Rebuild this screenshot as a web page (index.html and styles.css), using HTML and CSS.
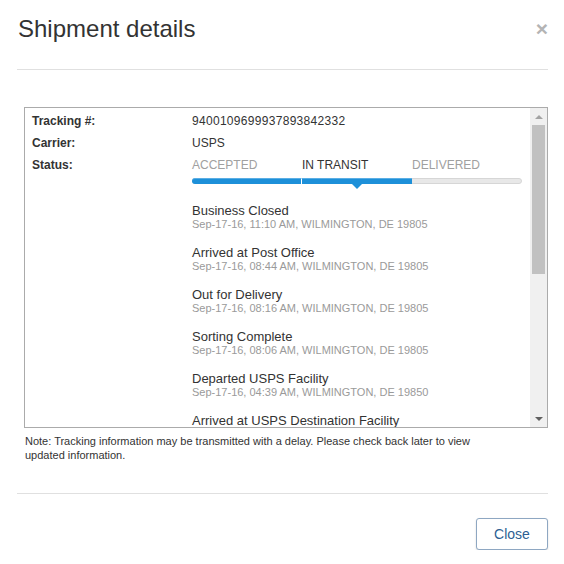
FILE: index.html
```html
<!DOCTYPE html>
<html lang="en">
<head>
    <meta charset="UTF-8">
    <title>Shipment details</title>
    <link rel="stylesheet" href="styles.css">
</head>
<body>
<div class="modal">
    <div class="modal-header">
        <h4 class="modal-title">Shipment details</h4>
        <span class="close">&times;</span>
    </div>
    <div class="modal-body">
        <div class="track-box">
            <div class="track-content">
                <div class="row">
                    <div class="label">Tracking #:</div>
                    <div class="value number">9400109699937893842332</div>
                </div>
                <div class="row">
                    <div class="label">Carrier:</div>
                    <div class="value">USPS</div>
                </div>
                <div class="row">
                    <div class="label">Status:</div>
                    <div class="value">
                        <div class="steps">
                            <span class="step-name">ACCEPTED</span>
                            <span class="step-name active">IN TRANSIT</span>
                            <span class="step-name">DELIVERED</span>
                        </div>
                        <div class="bar">
                            <div class="seg done"></div>
                            <div class="seg done current"></div>
                            <div class="seg"></div>
                        </div>
                        <ul class="events">
                            <li><div class="ev-title">Business Closed</div><div class="ev-info">Sep-17-16, 11:10 AM, WILMINGTON, DE 19805</div></li>
                            <li><div class="ev-title">Arrived at Post Office</div><div class="ev-info">Sep-17-16, 08:44 AM, WILMINGTON, DE 19805</div></li>
                            <li><div class="ev-title">Out for Delivery</div><div class="ev-info">Sep-17-16, 08:16 AM, WILMINGTON, DE 19805</div></li>
                            <li><div class="ev-title">Sorting Complete</div><div class="ev-info">Sep-17-16, 08:06 AM, WILMINGTON, DE 19805</div></li>
                            <li><div class="ev-title">Departed USPS Facility</div><div class="ev-info">Sep-17-16, 04:39 AM, WILMINGTON, DE 19850</div></li>
                            <li><div class="ev-title">Arrived at USPS Destination Facility</div></li>
                        </ul>
                    </div>
                </div>
            </div>
            <div class="scrollbar">
                <div class="sb-btn"><span class="arrow-up"></span></div>
                <div class="sb-track"><div class="sb-thumb"></div></div>
                <div class="sb-btn"><span class="arrow-down"></span></div>
            </div>
        </div>
        <p class="note">Note: Tracking information may be transmitted with a delay. Please check back later to view updated information.</p>
    </div>
    <div class="modal-footer">
        <button class="btn">Close</button>
    </div>
</div>
</body>
</html>
```

FILE: styles.css
```css
body{
    margin: 0;
    background: #fff;
    font-family: "Liberation Sans", Arial, sans-serif;
    color: #333;
}
.modal{
    padding: 0 16px 0 17px;
}
.modal-header{
    display: flex;
    justify-content: space-between;
    align-items: flex-start;
    padding-top: 16px;
    height: 53px;
    border-bottom: 1px solid #e0e0e0;
}
.modal-title{
    margin: 0 0 0 1px;
    font-size: 24px;
    font-weight: normal;
    line-height: 26px;
}
.close{
    font-size: 21px;
    font-weight: bold;
    line-height: 24px;
    color: #b4b4b4;
    margin-top: 1px;
}
.modal-body{
    padding-top: 37px;
}
.track-box{
    display: flex;
    margin-left: 7px;
    height: 319px;
    border: 1px solid #ababab;
}
.track-content{
    flex: 1;
    overflow: hidden;
    padding: 2px 0 0 7px;
}
.row{
    display: flex;
    font-size: 12px;
    line-height: 22px;
}
.label{
    width: 160px;
    font-weight: bold;
}
.value{
    flex: 1;
}
.number{
    letter-spacing: 0.3px;
}
.steps{
    display: grid;
    grid-template-columns: 110px 110px 110px;
}
.step-name{
    color: #a0a0a0;
}
.step-name.active{
    color: #333;
}
.bar{
    display: flex;
    width: 328px;
    height: 4px;
    margin-top: 2px;
    background: #e8e8e8;
    border: 1px solid #d6d6d6;
    border-radius: 3px;
}
.seg{
    width: 110px;
    position: relative;
}
.seg.done{
    background: #1d90d9;
    border-top: 1px solid #5aaee4;
    margin-top: -1px;
    height: 5px;
}
.seg.done:first-child{
    border-radius: 3px 0 0 3px;
    margin-left: -1px;
}
.seg.current{
    border-left: 1px solid #fff;
}
.seg.current::after{
    content: "";
    position: absolute;
    left: 50%;
    bottom: -5px;
    margin-left: -5px;
    border-left: 5px solid transparent;
    border-right: 5px solid transparent;
    border-top: 5px solid #1d90d9;
}
.events{
    list-style: none;
    margin: 0;
    padding: 19px 0 0;
}
.events li{
    margin-bottom: 14px;
}
.ev-title{
    font-size: 13px;
    line-height: 15px;
    color: #333;
}
.ev-info{
    font-size: 11px;
    line-height: 13px;
    color: #9a9a9a;
}
.scrollbar{
    width: 17px;
    display: flex;
    flex-direction: column;
    background: #f0f0f0;
}
.sb-btn{
    height: 17px;
    display: flex;
    align-items: center;
    justify-content: center;
}
.arrow-up{
    border-left: 4px solid transparent;
    border-right: 4px solid transparent;
    border-bottom: 4px solid #a3a3a3;
}
.arrow-down{
    border-left: 4px solid transparent;
    border-right: 4px solid transparent;
    border-top: 4px solid #606060;
}
.sb-track{
    flex: 1;
    padding: 0 2px 0 2px;
}
.sb-thumb{
    height: 149px;
    background: #c1c1c1;
}
.note{
    max-width: 468px;
    margin: 6px 0 0 8px;
    font-size: 11px;
    line-height: 14px;
    color: #333;
}
.modal-footer{
    margin-top: 31px;
    border-top: 1px solid #e0e0e0;
    padding-top: 24px;
    display: flex;
    justify-content: flex-end;
}
.btn{
    width: 72px;
    height: 32px;
    background: #fff;
    border: 1px solid #8ea7c2;
    border-radius: 3px;
    box-shadow: 0 1px 2px rgba(0,0,0,.15);
    font-family: "Liberation Sans", Arial, sans-serif;
    font-size: 14px;
    color: #2d5f93;
}
```
